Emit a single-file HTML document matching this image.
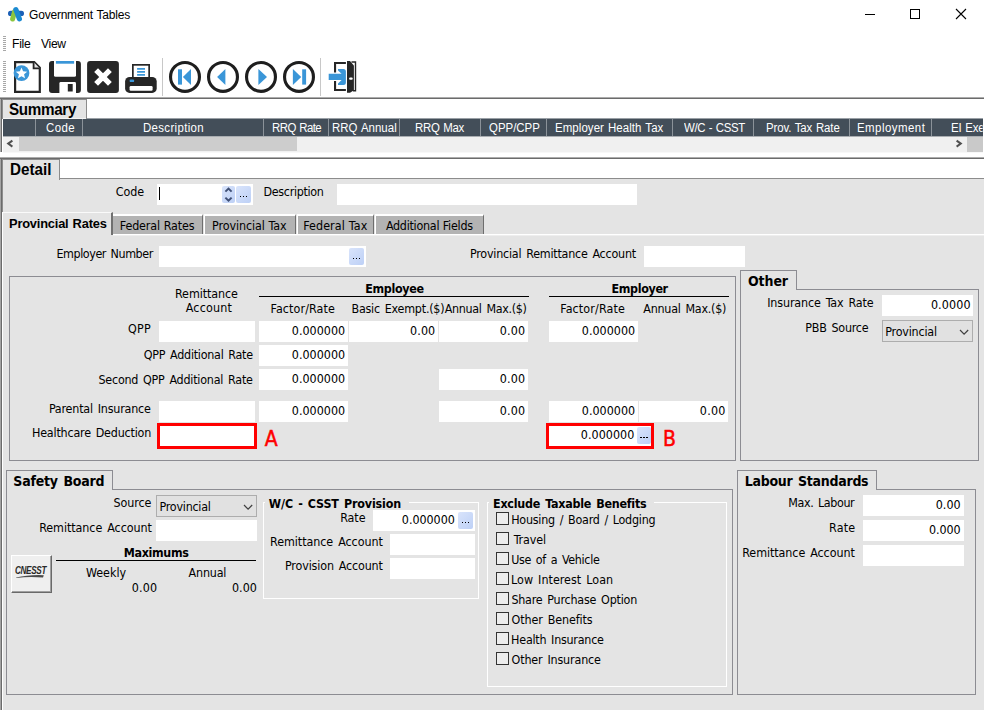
<!DOCTYPE html>
<html lang="en"><head><meta charset="utf-8"><title>Government Tables</title>
<style>
html,body{margin:0;padding:0;}
body{width:984px;height:710px;overflow:hidden;background:#fff;position:relative;}
#w{position:absolute;left:0;top:0;width:984px;height:710px;overflow:hidden;background:#fff;}
#w div{position:absolute;box-sizing:border-box;}
#w svg{position:absolute;overflow:visible;}
.t{position:absolute;white-space:pre;line-height:20px;height:20px;}
</style></head><body><div id="w">
<svg style="left:7px;top:6px" width="18" height="16" viewBox="7 6 18 16"><rect x="8" y="10.8" width="16" height="5.2" rx="2.6" fill="#1b5fb6"/><path d="M14.6 11.5 L12.6 19" stroke="#8cc63f" stroke-width="5" stroke-linecap="round" fill="none"/><path d="M15.9 9.6 L19.4 18.8" stroke="#1b8ad2" stroke-width="5.2" stroke-linecap="round" fill="none"/></svg>
<div style="left:865px;top:14px;width:10px;height:1px;background:#000;"></div>
<div style="left:910px;top:9px;width:10px;height:10px;background:transparent;border:1px solid #000;"></div>
<svg style="left:955px;top:8px" width="12" height="12" viewBox="0 0 12 12"><path d="M1 1 L11 11 M11 1 L1 11" stroke="#000" stroke-width="1.1" fill="none"/></svg>
<div style="left:3px;top:36px;width:3px;height:15px;background:repeating-linear-gradient(to bottom,#a8a8a8 0 1px,#fff 1px 2px);"></div>
<div style="left:3px;top:61px;width:3px;height:31px;background:repeating-linear-gradient(to bottom,#a8a8a8 0 1px,#fff 1px 2px);"></div>
<div style="left:162px;top:58px;width:1px;height:38px;background:#c8c8c8;"></div>
<div style="left:320px;top:58px;width:1px;height:38px;background:#c8c8c8;"></div>
<svg style="left:13px;top:60px" width="29" height="34" viewBox="13 60 29 34"><path d="M15.1 62.1 H34.2 L39.8 67.8 V91.8 H15.1 Z" fill="#fff" stroke="#262626" stroke-width="2.2"/><path d="M33.6 62.1 V68.4 H39.8" fill="#e4e4e4" stroke="#262626" stroke-width="1.8"/><circle cx="21.5" cy="73.1" r="7.9" fill="#3a96d8"/><path d="M21.50 67.50 L23.09 71.32 L27.21 71.65 L24.07 74.33 L25.03 78.35 L21.50 76.20 L17.97 78.35 L18.93 74.33 L15.79 71.65 L19.91 71.32 Z" fill="#fff"/></svg>
<svg style="left:49px;top:61px" width="32" height="32" viewBox="49 61 32 32"><rect x="49" y="61" width="31.9" height="31.9" rx="3" fill="#262626"/><path d="M54 61 H76 V75.3 Q76 76.8 74.5 76.8 H55.5 Q54 76.8 54 75.3 Z" fill="#fff"/><rect x="55.9" y="61" width="18.2" height="2.7" fill="#3a96d8"/><path d="M59.4 92.9 V83.4 Q59.4 82.1 60.7 82.1 H74.7 Q76 82.1 76 83.4 V92.9 Z" fill="#fff"/><rect x="67.8" y="84" width="4.9" height="7.5" fill="#262626"/></svg>
<svg style="left:87px;top:61px" width="32" height="32" viewBox="87 61 32 32"><rect x="87.1" y="61" width="31.8" height="31.9" rx="3" fill="#262626"/><path d="M96.1 70.1 L109.9 83.9 M109.9 70.1 L96.1 83.9" stroke="#fff" stroke-width="5.4" fill="none"/></svg>
<svg style="left:125px;top:61px" width="32" height="32" viewBox="125 61 32 32"><rect x="132.85" y="64.85" width="16.3" height="13" fill="#fff" stroke="#262626" stroke-width="1.7"/><path d="M137.1 68.85 H145 M137.1 71.9 H145 M137.1 74.85 H145" stroke="#3a96d8" stroke-width="1.7"/><rect x="125.1" y="77" width="31.6" height="15.9" rx="4.5" fill="#262626"/><rect x="129.6" y="79.6" width="4.6" height="2.5" rx="1.2" fill="#3a96d8"/><rect x="129.6" y="86.1" width="23" height="4.6" rx="1.2" fill="#fff"/></svg>
<svg style="left:168px;top:60px" width="34" height="34" viewBox="168 60 34 34"><circle cx="185" cy="76.9" r="14.45" fill="#fff" stroke="#1e1e1e" stroke-width="3.1"/><rect x="178" y="69.3" width="4" height="15.3" fill="#3a96d8"/><path d="M191 69.1 V85 L182.9 77 Z" fill="#3a96d8"/></svg>
<svg style="left:206px;top:60px" width="34" height="34" viewBox="206 60 34 34"><circle cx="223" cy="76.9" r="14.45" fill="#fff" stroke="#1e1e1e" stroke-width="3.1"/><path d="M225.4 69.1 V85 L217.1 77 Z" fill="#3a96d8"/></svg>
<svg style="left:244px;top:60px" width="34" height="34" viewBox="244 60 34 34"><circle cx="261" cy="76.9" r="14.45" fill="#fff" stroke="#1e1e1e" stroke-width="3.1"/><path d="M258.4 69.1 V85 L267 77 Z" fill="#3a96d8"/></svg>
<svg style="left:282px;top:60px" width="34" height="34" viewBox="282 60 34 34"><circle cx="299" cy="76.9" r="14.45" fill="#fff" stroke="#1e1e1e" stroke-width="3.1"/><rect x="302.2" y="69.3" width="3.9" height="15.3" fill="#3a96d8"/><path d="M292.9 69.1 V85 L301.2 77 Z" fill="#3a96d8"/></svg>
<svg style="left:327px;top:60px" width="32" height="34" viewBox="327 60 32 34"><path d="M335.05 72.6 V62.95 H345.9 M335.05 81.1 V90.05 H345.9" fill="none" stroke="#262626" stroke-width="2.1"/><path d="M351.5 62 H355.5 V90.8 H353" fill="none" stroke="#262626" stroke-width="1.4"/><path d="M347 61 H350 L353.9 65.5 V90.3 L350 92.7 H347 Z" fill="#262626"/><rect x="349.1" y="77.6" width="3.6" height="2.1" rx="1" fill="#fff"/><path d="M328.7 73.8 H341.6 L338 70.6 V69.1 H343.4 Q345.9 69.1 345.9 71.6 V82.5 Q345.9 85 343.4 85 H338 V83.4 L341.6 80 H328.7 Z" fill="#3a96d8"/></svg>
<div style="left:0px;top:97px;width:984px;height:1px;background:#acacac;"></div>
<div style="left:0px;top:98px;width:984px;height:1px;background:#6b6b6b;"></div>
<div style="left:0px;top:99px;width:1px;height:53px;background:#acacac;"></div>
<div style="left:1px;top:99px;width:1px;height:53px;background:#6b6b6b;"></div>
<div style="left:0px;top:159px;width:1px;height:551px;background:#a4a4a4;"></div>
<div style="left:1px;top:159px;width:1px;height:551px;background:#6b6b6b;"></div>
<div style="left:2px;top:159px;width:1px;height:53px;background:#8c8c8c;"></div>
<div style="left:2px;top:212px;width:1px;height:498px;background:#fff;"></div>
<div style="left:2px;top:99px;width:85px;height:20px;background:#e4e4e4;border:1px solid #8c8c8c;border-bottom:none;"></div>
<div style="left:3px;top:118px;width:83px;height:1px;background:#f4f4f4;"></div>
<div style="left:87px;top:118px;width:896px;height:1px;background:#9aa0a6;"></div>
<div style="left:3px;top:119px;width:980px;height:17px;background:#434e59;"></div>
<div style="left:35px;top:119px;width:1px;height:17px;background:#8b9299;"></div>
<div style="left:82px;top:119px;width:1px;height:17px;background:#8b9299;"></div>
<div style="left:263px;top:119px;width:1px;height:17px;background:#8b9299;"></div>
<div style="left:328px;top:119px;width:1px;height:17px;background:#8b9299;"></div>
<div style="left:399px;top:119px;width:1px;height:17px;background:#8b9299;"></div>
<div style="left:480px;top:119px;width:1px;height:17px;background:#8b9299;"></div>
<div style="left:546px;top:119px;width:1px;height:17px;background:#8b9299;"></div>
<div style="left:672px;top:119px;width:1px;height:17px;background:#8b9299;"></div>
<div style="left:753px;top:119px;width:1px;height:17px;background:#8b9299;"></div>
<div style="left:849px;top:119px;width:1px;height:17px;background:#8b9299;"></div>
<div style="left:931px;top:119px;width:1px;height:17px;background:#8b9299;"></div>
<div style="left:3px;top:136px;width:980px;height:1px;background:#a9adb1;"></div>
<div style="left:3px;top:137px;width:980px;height:15px;background:#f0f0f0;"></div>
<div style="left:3px;top:152px;width:980px;height:1px;background:#f8f8f8;"></div>
<div style="left:19px;top:137px;width:278px;height:14px;background:#cdcdcd;"></div>
<div style="left:967px;top:137px;width:16px;height:15px;background:#c9c9c9;"></div>
<svg style="left:6px;top:139px" width="9" height="10" viewBox="6 139 9 10"><path d="M12.4 140.6 L8.2 143.6 L12.4 146.6" stroke="#505050" stroke-width="2" fill="none"/></svg>
<svg style="left:954px;top:139px" width="9" height="10" viewBox="954 139 9 10"><path d="M956.6 140.6 L960.8 143.6 L956.6 146.6" stroke="#505050" stroke-width="2" fill="none"/></svg>
<div style="left:0px;top:157px;width:984px;height:1px;background:#acacac;"></div>
<div style="left:0px;top:158px;width:984px;height:1px;background:#6b6b6b;"></div>
<div style="left:3px;top:179px;width:981px;height:531px;background:#e4e4e4;"></div>
<div style="left:60px;top:178px;width:924px;height:1px;background:#8c8c8c;"></div>
<div style="left:2px;top:159px;width:58px;height:21px;background:#e4e4e4;border:1px solid #8c8c8c;border-bottom:none;"></div>
<div style="left:157px;top:184px;width:96px;height:21px;background:#fff;"></div>
<div style="left:159px;top:187px;width:1px;height:13px;background:#000;"></div>
<div style="left:222px;top:186px;width:13px;height:17px;background:linear-gradient(135deg,#d9e4fb,#bdd0f6);border-radius:2px;"></div>
<svg style="left:222px;top:186px" width="13" height="17" viewBox="222 186 13 17"><path d="M225.4 191.6 L228.5 188.6 L231.6 191.6 M225.4 197.6 L228.5 200.6 L231.6 197.6" stroke="#3f4f75" stroke-width="2" fill="none"/></svg>
<div style="left:236px;top:186px;width:15px;height:17px;background:linear-gradient(135deg,#d9e4fb,#bdd0f6);border-radius:2px;"></div>
<div style="left:239.8px;top:195.8px;width:1.4px;height:1.4px;background:#000;"></div>
<div style="left:242.8px;top:195.8px;width:1.4px;height:1.4px;background:#000;"></div>
<div style="left:245.8px;top:195.8px;width:1.4px;height:1.4px;background:#000;"></div>
<div style="left:337px;top:184px;width:300px;height:21px;background:#fff;"></div>
<div style="left:2px;top:212px;width:111px;height:23px;background:#e4e4e4;border-left:1px solid #fff;border-top:1px solid #fafafa;border-right:2px solid #707070;"></div>
<div style="left:113px;top:234px;width:871px;height:1px;background:#fff;"></div>
<div style="left:113px;top:235px;width:871px;height:1px;background:#eeeeee;"></div>
<div style="left:113px;top:214px;width:90px;height:20px;background:#b3b3b3;border-top:2px solid #fff;border-right:1px solid #6e6e6e;"></div>
<div style="left:204px;top:214px;width:92px;height:20px;background:#b3b3b3;border-left:1px solid #fff;border-top:2px solid #fff;border-right:1px solid #6e6e6e;"></div>
<div style="left:297px;top:214px;width:77px;height:20px;background:#b3b3b3;border-left:1px solid #fff;border-top:2px solid #fff;border-right:1px solid #6e6e6e;"></div>
<div style="left:375px;top:214px;width:109px;height:20px;background:#b3b3b3;border-left:1px solid #fff;border-top:2px solid #fff;border-right:1px solid #6e6e6e;"></div>
<div style="left:159px;top:246px;width:207px;height:21px;background:#fff;"></div>
<div style="left:349px;top:248px;width:15px;height:17px;background:linear-gradient(135deg,#d9e4fb,#bdd0f6);border-radius:2px;"></div>
<div style="left:352.8px;top:257.8px;width:1.4px;height:1.4px;background:#000;"></div>
<div style="left:355.8px;top:257.8px;width:1.4px;height:1.4px;background:#000;"></div>
<div style="left:358.8px;top:257.8px;width:1.4px;height:1.4px;background:#000;"></div>
<div style="left:644px;top:246px;width:101px;height:21px;background:#fff;"></div>
<div style="left:9px;top:276px;width:727px;height:185px;background:transparent;border:1px solid #8c8c92;"></div>
<div style="left:259px;top:296px;width:270px;height:1px;background:#000;"></div>
<div style="left:549px;top:296px;width:180px;height:1px;background:#000;"></div>
<div style="left:159px;top:321px;width:96px;height:21px;background:#fff;"></div>
<div style="left:259px;top:321px;width:89px;height:21px;background:#fff;"></div>
<div style="left:349px;top:321px;width:89px;height:21px;background:#fff;"></div>
<div style="left:439px;top:321px;width:89px;height:21px;background:#fff;"></div>
<div style="left:549px;top:321px;width:89px;height:21px;background:#fff;"></div>
<div style="left:259px;top:345px;width:89px;height:21px;background:#fff;"></div>
<div style="left:259px;top:369px;width:89px;height:21px;background:#fff;"></div>
<div style="left:439px;top:369px;width:89px;height:21px;background:#fff;"></div>
<div style="left:159px;top:401px;width:96px;height:21px;background:#fff;"></div>
<div style="left:259px;top:401px;width:89px;height:21px;background:#fff;"></div>
<div style="left:439px;top:401px;width:89px;height:21px;background:#fff;"></div>
<div style="left:549px;top:401px;width:89px;height:21px;background:#fff;"></div>
<div style="left:639px;top:401px;width:89px;height:21px;background:#fff;"></div>
<div style="left:157px;top:423px;width:100px;height:26px;background:#fff;border:3px solid #f00;"></div>
<div style="left:546px;top:423px;width:108px;height:26px;background:#fff;border:3px solid #f00;"></div>
<div style="left:637px;top:427px;width:14px;height:17px;background:linear-gradient(135deg,#d9e4fb,#bdd0f6);border-radius:2px;"></div>
<div style="left:640.3px;top:436.8px;width:1.4px;height:1.4px;background:#000;"></div>
<div style="left:643.3px;top:436.8px;width:1.4px;height:1.4px;background:#000;"></div>
<div style="left:646.3px;top:436.8px;width:1.4px;height:1.4px;background:#000;"></div>
<div style="left:740px;top:289px;width:239px;height:172px;background:transparent;border:1px solid #8c8c92;"></div>
<div style="left:740px;top:270px;width:57px;height:20px;background:#e4e4e4;border:1px solid #8c8c92;border-bottom:none;"></div>
<div style="left:882px;top:295px;width:91px;height:21px;background:#fff;"></div>
<div style="left:882px;top:320px;width:91px;height:22px;background:#e1e1e1;border:1px solid #adadad;"></div>
<svg style="left:958.8px;top:328.6px" width="10.200000000000045" height="6.199999999999989" viewBox="958.8 328.6 10.200000000000045 6.199999999999989"><path d="M959.8 329.6 L963.9 333.8 L968 329.6" stroke="#404040" stroke-width="1.2" fill="none"/></svg>
<div style="left:6px;top:489px;width:727px;height:206px;background:transparent;border:1px solid #8c8c92;"></div>
<div style="left:6px;top:470px;width:107px;height:20px;background:#e4e4e4;border:1px solid #8c8c92;border-bottom:none;"></div>
<div style="left:156px;top:495px;width:101px;height:22px;background:#e1e1e1;border:1px solid #adadad;"></div>
<svg style="left:242.9px;top:503.7px" width="10.199999999999989" height="6.199999999999989" viewBox="242.9 503.7 10.199999999999989 6.199999999999989"><path d="M243.9 504.7 L248.0 508.9 L252.1 504.7" stroke="#404040" stroke-width="1.2" fill="none"/></svg>
<div style="left:156px;top:520px;width:101px;height:21px;background:#fff;"></div>
<div style="left:56px;top:560px;width:200px;height:1px;background:#000;"></div>
<div style="left:11px;top:555px;width:41px;height:38px;background:#efefef;border-left:1px solid #fff;border-top:1px solid #fff;border-right:1px solid #696969;border-bottom:1px solid #696969;box-shadow:inset -1px -1px 0 #a0a0a0;"></div>
<svg style="left:15px;top:574px" width="32" height="5" viewBox="15 574 32 5"><path d="M16.2 577.6 Q28 574.6 43.8 575.2 L43 577.6 Q30 576.2 16.2 577.9 Z" fill="#4a4a4a"/></svg>
<div style="left:263px;top:502px;width:216px;height:97px;background:transparent;border:1px solid #fff;"></div>
<div style="left:265px;top:498px;width:144px;height:10px;background:#e4e4e4;"></div>
<div style="left:373px;top:510px;width:102px;height:21px;background:#fff;"></div>
<div style="left:458px;top:512px;width:15px;height:17px;background:linear-gradient(135deg,#d9e4fb,#bdd0f6);border-radius:2px;"></div>
<div style="left:461.8px;top:521.8px;width:1.4px;height:1.4px;background:#000;"></div>
<div style="left:464.8px;top:521.8px;width:1.4px;height:1.4px;background:#000;"></div>
<div style="left:467.8px;top:521.8px;width:1.4px;height:1.4px;background:#000;"></div>
<div style="left:390px;top:534px;width:85px;height:21px;background:#fff;"></div>
<div style="left:390px;top:558px;width:85px;height:21px;background:#fff;"></div>
<div style="left:487px;top:502px;width:240px;height:185px;background:transparent;border:1px solid #fff;"></div>
<div style="left:489px;top:498px;width:165px;height:10px;background:#e4e4e4;"></div>
<div style="left:496px;top:512px;width:13px;height:13px;background:#ededed;border:1px solid #333;"></div>
<div style="left:496px;top:532px;width:13px;height:13px;background:#ededed;border:1px solid #333;"></div>
<div style="left:496px;top:552px;width:13px;height:13px;background:#ededed;border:1px solid #333;"></div>
<div style="left:496px;top:572px;width:13px;height:13px;background:#ededed;border:1px solid #333;"></div>
<div style="left:496px;top:592px;width:13px;height:13px;background:#ededed;border:1px solid #333;"></div>
<div style="left:496px;top:612px;width:13px;height:13px;background:#ededed;border:1px solid #333;"></div>
<div style="left:496px;top:632px;width:13px;height:13px;background:#ededed;border:1px solid #333;"></div>
<div style="left:496px;top:652px;width:13px;height:13px;background:#ededed;border:1px solid #333;"></div>
<div style="left:737px;top:489px;width:239px;height:206px;background:transparent;border:1px solid #8c8c92;"></div>
<div style="left:737px;top:470px;width:140px;height:20px;background:#e4e4e4;border:1px solid #8c8c92;border-bottom:none;"></div>
<div style="left:863px;top:495px;width:101px;height:21px;background:#fff;"></div>
<div style="left:863px;top:520px;width:101px;height:21px;background:#fff;"></div>
<div style="left:863px;top:545px;width:101px;height:21px;background:#fff;"></div>
<span class="t" style="left:29.11px;top:5.00px;font-family:'Liberation Sans',sans-serif;font-size:12px;color:#000;letter-spacing:-0.225px;word-spacing:0.8px;">Government Tables</span>
<span class="t" style="left:12.33px;top:34.00px;font-family:'Liberation Sans',sans-serif;font-size:12.8px;color:#000;letter-spacing:-0.295px;transform:scaleX(0.95);transform-origin:0 0;">File</span>
<span class="t" style="left:41.18px;top:34.00px;font-family:'Liberation Sans',sans-serif;font-size:12.8px;color:#000;letter-spacing:-0.374px;transform:scaleX(0.95);transform-origin:0 0;">View</span>
<span class="t" style="left:9.48px;top:99.00px;font-family:'Liberation Sans',sans-serif;font-size:16.2px;color:#000;font-weight:bold;letter-spacing:-0.342px;transform:scaleX(0.94);transform-origin:0 0;">Summary</span>
<span class="t" style="left:46.36px;top:118.00px;font-family:'Liberation Sans',sans-serif;font-size:12.3px;color:#fff;letter-spacing:0.418px;transform:scaleX(0.93);transform-origin:0 0;">Code</span>
<span class="t" style="left:143.29px;top:118.00px;font-family:'Liberation Sans',sans-serif;font-size:12.3px;color:#fff;letter-spacing:0.365px;transform:scaleX(0.93);transform-origin:0 0;">Description</span>
<span class="t" style="left:271.79px;top:118.00px;font-family:'Liberation Sans',sans-serif;font-size:12.3px;color:#fff;letter-spacing:-0.582px;word-spacing:0.8px;transform:scaleX(0.93);transform-origin:0 0;">RRQ Rate</span>
<span class="t" style="left:332.06px;top:118.00px;font-family:'Liberation Sans',sans-serif;font-size:12.3px;color:#fff;letter-spacing:0.048px;word-spacing:0.8px;transform:scaleX(0.93);transform-origin:0 0;">RRQ Annual</span>
<span class="t" style="left:415.06px;top:118.00px;font-family:'Liberation Sans',sans-serif;font-size:12.3px;color:#fff;letter-spacing:-0.295px;word-spacing:0.8px;transform:scaleX(0.93);transform-origin:0 0;">RRQ Max</span>
<span class="t" style="left:488.73px;top:118.00px;font-family:'Liberation Sans',sans-serif;font-size:12.3px;color:#fff;letter-spacing:-0.003px;transform:scaleX(0.93);transform-origin:0 0;">QPP/CPP</span>
<span class="t" style="left:555.30px;top:118.00px;font-family:'Liberation Sans',sans-serif;font-size:12.3px;color:#fff;letter-spacing:0.092px;word-spacing:0.8px;transform:scaleX(0.93);transform-origin:0 0;">Employer Health Tax</span>
<span class="t" style="left:684.09px;top:118.00px;font-family:'Liberation Sans',sans-serif;font-size:12.3px;color:#fff;letter-spacing:-0.374px;word-spacing:0.8px;transform:scaleX(0.93);transform-origin:0 0;">W/C - CSST</span>
<span class="t" style="left:765.68px;top:118.00px;font-family:'Liberation Sans',sans-serif;font-size:12.3px;color:#fff;letter-spacing:-0.140px;word-spacing:0.8px;transform:scaleX(0.93);transform-origin:0 0;">Prov. Tax Rate</span>
<span class="t" style="left:856.89px;top:118.00px;font-family:'Liberation Sans',sans-serif;font-size:12.3px;color:#fff;letter-spacing:0.517px;transform:scaleX(0.93);transform-origin:0 0;">Employment</span>
<span class="t" style="left:950.90px;top:118.00px;font-family:'Liberation Sans',sans-serif;font-size:12.3px;color:#fff;letter-spacing:-0.191px;word-spacing:0.8px;overflow:hidden;width:33.5px;transform:scaleX(0.93);transform-origin:0 0;">EI Exempt</span>
<span class="t" style="left:10.11px;top:159.00px;font-family:'Liberation Sans',sans-serif;font-size:16.2px;color:#000;font-weight:bold;letter-spacing:0.035px;transform:scaleX(0.94);transform-origin:0 0;">Detail</span>
<span class="t" style="left:115.85px;top:182.00px;font-family:'DejaVu Sans Condensed','Liberation Sans',sans-serif;font-size:12.4px;color:#000;letter-spacing:-0.122px;">Code</span>
<span class="t" style="left:263.59px;top:182.00px;font-family:'DejaVu Sans Condensed','Liberation Sans',sans-serif;font-size:12.4px;color:#000;letter-spacing:-0.330px;">Description</span>
<span class="t" style="left:8.78px;top:214.00px;font-family:'Liberation Sans',sans-serif;font-size:13.4px;color:#000;font-weight:bold;letter-spacing:-0.207px;word-spacing:0.8px;transform:scaleX(0.96);transform-origin:0 0;">Provincial Rates</span>
<span class="t" style="left:119.80px;top:216.00px;font-family:'DejaVu Sans Condensed','Liberation Sans',sans-serif;font-size:12.4px;color:#000;letter-spacing:-0.126px;word-spacing:0.3px;">Federal Rates</span>
<span class="t" style="left:212.04px;top:216.00px;font-family:'DejaVu Sans Condensed','Liberation Sans',sans-serif;font-size:12.4px;color:#000;letter-spacing:-0.080px;word-spacing:0.3px;">Provincial Tax</span>
<span class="t" style="left:303.19px;top:216.00px;font-family:'DejaVu Sans Condensed','Liberation Sans',sans-serif;font-size:12.4px;color:#000;letter-spacing:0.100px;word-spacing:0.3px;">Federal Tax</span>
<span class="t" style="left:385.89px;top:216.00px;font-family:'DejaVu Sans Condensed','Liberation Sans',sans-serif;font-size:12.4px;color:#000;letter-spacing:-0.256px;word-spacing:0.3px;">Additional Fields</span>
<span class="t" style="left:56.47px;top:244.00px;font-family:'DejaVu Sans Condensed','Liberation Sans',sans-serif;font-size:12.4px;color:#000;letter-spacing:-0.424px;word-spacing:1.5px;">Employer Number</span>
<span class="t" style="left:470.01px;top:244.00px;font-family:'DejaVu Sans Condensed','Liberation Sans',sans-serif;font-size:12.4px;color:#000;letter-spacing:-0.219px;word-spacing:1.5px;">Provincial Remittance Account</span>
<span class="t" style="left:175.02px;top:284.00px;font-family:'DejaVu Sans Condensed','Liberation Sans',sans-serif;font-size:12.4px;color:#000;letter-spacing:-0.086px;">Remittance</span>
<span class="t" style="left:185.78px;top:298.00px;font-family:'DejaVu Sans Condensed','Liberation Sans',sans-serif;font-size:12.4px;color:#000;letter-spacing:0.189px;">Account</span>
<span class="t" style="left:365.24px;top:279.00px;font-family:'DejaVu Sans Condensed','Liberation Sans',sans-serif;font-size:12.4px;color:#000;font-weight:bold;letter-spacing:-0.313px;">Employee</span>
<span class="t" style="left:611.50px;top:279.00px;font-family:'DejaVu Sans Condensed','Liberation Sans',sans-serif;font-size:12.4px;color:#000;font-weight:bold;letter-spacing:-0.346px;">Employer</span>
<span class="t" style="left:270.50px;top:299.00px;font-family:'DejaVu Sans Condensed','Liberation Sans',sans-serif;font-size:12.4px;color:#000;letter-spacing:0.106px;">Factor/Rate</span>
<span class="t" style="left:351.46px;top:299.00px;font-family:'DejaVu Sans Condensed','Liberation Sans',sans-serif;font-size:12.4px;color:#000;letter-spacing:-0.211px;word-spacing:1.5px;">Basic Exempt.($)</span>
<span class="t" style="left:444.74px;top:299.00px;font-family:'DejaVu Sans Condensed','Liberation Sans',sans-serif;font-size:12.4px;color:#000;letter-spacing:-0.307px;word-spacing:1.5px;">Annual Max.($)</span>
<span class="t" style="left:560.24px;top:299.00px;font-family:'DejaVu Sans Condensed','Liberation Sans',sans-serif;font-size:12.4px;color:#000;letter-spacing:0.133px;">Factor/Rate</span>
<span class="t" style="left:643.28px;top:299.00px;font-family:'DejaVu Sans Condensed','Liberation Sans',sans-serif;font-size:12.4px;color:#000;letter-spacing:-0.233px;word-spacing:1.5px;">Annual Max.($)</span>
<span class="t" style="left:127.96px;top:319.00px;font-family:'DejaVu Sans Condensed','Liberation Sans',sans-serif;font-size:12.4px;color:#000;letter-spacing:0.331px;">QPP</span>
<span class="t" style="left:143.85px;top:345.00px;font-family:'DejaVu Sans Condensed','Liberation Sans',sans-serif;font-size:12.4px;color:#000;letter-spacing:-0.254px;word-spacing:1.5px;">QPP Additional Rate</span>
<span class="t" style="left:98.47px;top:370.00px;font-family:'DejaVu Sans Condensed','Liberation Sans',sans-serif;font-size:12.4px;color:#000;letter-spacing:-0.216px;word-spacing:1.5px;">Second QPP Additional Rate</span>
<span class="t" style="left:48.89px;top:399.00px;font-family:'DejaVu Sans Condensed','Liberation Sans',sans-serif;font-size:12.4px;color:#000;letter-spacing:-0.189px;word-spacing:1.5px;">Parental Insurance</span>
<span class="t" style="left:31.97px;top:423.00px;font-family:'DejaVu Sans Condensed','Liberation Sans',sans-serif;font-size:12.4px;color:#000;letter-spacing:-0.186px;word-spacing:1.5px;">Healthcare Deduction</span>
<span class="t" style="left:291.84px;top:321.00px;font-family:'DejaVu Sans Condensed','Liberation Sans',sans-serif;font-size:12.4px;color:#000;letter-spacing:0.009px;">0.000000</span>
<span class="t" style="left:291.84px;top:345.00px;font-family:'DejaVu Sans Condensed','Liberation Sans',sans-serif;font-size:12.4px;color:#000;letter-spacing:0.009px;">0.000000</span>
<span class="t" style="left:291.84px;top:369.00px;font-family:'DejaVu Sans Condensed','Liberation Sans',sans-serif;font-size:12.4px;color:#000;letter-spacing:0.009px;">0.000000</span>
<span class="t" style="left:291.84px;top:401.00px;font-family:'DejaVu Sans Condensed','Liberation Sans',sans-serif;font-size:12.4px;color:#000;letter-spacing:0.009px;">0.000000</span>
<span class="t" style="left:410.12px;top:321.00px;font-family:'DejaVu Sans Condensed','Liberation Sans',sans-serif;font-size:12.4px;color:#000;letter-spacing:0.079px;">0.00</span>
<span class="t" style="left:499.84px;top:321.00px;font-family:'DejaVu Sans Condensed','Liberation Sans',sans-serif;font-size:12.4px;color:#000;letter-spacing:0.169px;">0.00</span>
<span class="t" style="left:499.84px;top:369.00px;font-family:'DejaVu Sans Condensed','Liberation Sans',sans-serif;font-size:12.4px;color:#000;letter-spacing:0.169px;">0.00</span>
<span class="t" style="left:499.84px;top:401.00px;font-family:'DejaVu Sans Condensed','Liberation Sans',sans-serif;font-size:12.4px;color:#000;letter-spacing:0.169px;">0.00</span>
<span class="t" style="left:581.84px;top:321.00px;font-family:'DejaVu Sans Condensed','Liberation Sans',sans-serif;font-size:12.4px;color:#000;letter-spacing:0.009px;">0.000000</span>
<span class="t" style="left:581.84px;top:401.00px;font-family:'DejaVu Sans Condensed','Liberation Sans',sans-serif;font-size:12.4px;color:#000;letter-spacing:0.009px;">0.000000</span>
<span class="t" style="left:699.83px;top:401.00px;font-family:'DejaVu Sans Condensed','Liberation Sans',sans-serif;font-size:12.4px;color:#000;letter-spacing:0.212px;">0.00</span>
<span class="t" style="left:264.81px;top:429.00px;font-family:'DejaVu Sans Condensed','Liberation Sans',sans-serif;font-size:21px;color:#f00;-webkit-text-stroke:0.5px #f00;">A</span>
<span class="t" style="left:580.82px;top:425.00px;font-family:'DejaVu Sans Condensed','Liberation Sans',sans-serif;font-size:12.4px;color:#000;letter-spacing:0.053px;">0.000000</span>
<span class="t" style="left:662.99px;top:429.00px;font-family:'DejaVu Sans Condensed','Liberation Sans',sans-serif;font-size:21px;color:#f00;-webkit-text-stroke:0.5px #f00;">B</span>
<span class="t" style="left:747.94px;top:271.00px;font-family:'DejaVu Sans Condensed','Liberation Sans',sans-serif;font-size:14px;color:#000;font-weight:bold;letter-spacing:-0.083px;">Other</span>
<span class="t" style="left:767.20px;top:293.00px;font-family:'DejaVu Sans Condensed','Liberation Sans',sans-serif;font-size:12.4px;color:#000;letter-spacing:-0.124px;word-spacing:1.5px;">Insurance Tax Rate</span>
<span class="t" style="left:930.90px;top:295.00px;font-family:'DejaVu Sans Condensed','Liberation Sans',sans-serif;font-size:12.4px;color:#000;letter-spacing:0.121px;">0.0000</span>
<span class="t" style="left:805.18px;top:318.00px;font-family:'DejaVu Sans Condensed','Liberation Sans',sans-serif;font-size:12.4px;color:#000;letter-spacing:-0.207px;word-spacing:1.5px;">PBB Source</span>
<span class="t" style="left:885.33px;top:322.00px;font-family:'DejaVu Sans Condensed','Liberation Sans',sans-serif;font-size:12.4px;color:#000;letter-spacing:-0.208px;">Provincial</span>
<span class="t" style="left:13.32px;top:471.00px;font-family:'DejaVu Sans Condensed','Liberation Sans',sans-serif;font-size:14px;color:#000;font-weight:bold;letter-spacing:-0.219px;word-spacing:1.5px;">Safety Board</span>
<span class="t" style="left:113.48px;top:493.00px;font-family:'DejaVu Sans Condensed','Liberation Sans',sans-serif;font-size:12.4px;color:#000;letter-spacing:-0.063px;">Source</span>
<span class="t" style="left:159.54px;top:497.00px;font-family:'DejaVu Sans Condensed','Liberation Sans',sans-serif;font-size:12.4px;color:#000;letter-spacing:-0.241px;">Provincial</span>
<span class="t" style="left:39.18px;top:518.00px;font-family:'DejaVu Sans Condensed','Liberation Sans',sans-serif;font-size:12.4px;color:#000;letter-spacing:-0.056px;word-spacing:1.5px;">Remittance Account</span>
<span class="t" style="left:123.87px;top:543.00px;font-family:'DejaVu Sans Condensed','Liberation Sans',sans-serif;font-size:12.4px;color:#000;font-weight:bold;letter-spacing:-0.358px;">Maximums</span>
<span class="t" style="left:85.94px;top:563.00px;font-family:'DejaVu Sans Condensed','Liberation Sans',sans-serif;font-size:12.4px;color:#000;letter-spacing:0.005px;">Weekly</span>
<span class="t" style="left:188.52px;top:563.00px;font-family:'DejaVu Sans Condensed','Liberation Sans',sans-serif;font-size:12.4px;color:#000;letter-spacing:-0.162px;">Annual</span>
<span class="t" style="left:131.79px;top:578.00px;font-family:'DejaVu Sans Condensed','Liberation Sans',sans-serif;font-size:12.4px;color:#000;letter-spacing:0.139px;">0.00</span>
<span class="t" style="left:231.95px;top:578.00px;font-family:'DejaVu Sans Condensed','Liberation Sans',sans-serif;font-size:12.4px;color:#000;letter-spacing:0.068px;">0.00</span>
<span class="t" style="left:15.12px;top:561.00px;font-family:'Liberation Sans',sans-serif;font-size:10.2px;color:#2a2a2a;font-weight:bold;font-style:italic;letter-spacing:-0.404px;transform:scaleX(0.8);transform-origin:0 0;">CNESST</span>
<span class="t" style="left:268.85px;top:494.00px;font-family:'DejaVu Sans Condensed','Liberation Sans',sans-serif;font-size:12.4px;color:#000;font-weight:bold;letter-spacing:-0.159px;word-spacing:1.5px;">W/C - CSST Provision</span>
<span class="t" style="left:340.13px;top:508.00px;font-family:'DejaVu Sans Condensed','Liberation Sans',sans-serif;font-size:12.4px;color:#000;letter-spacing:-0.055px;">Rate</span>
<span class="t" style="left:401.84px;top:510.00px;font-family:'DejaVu Sans Condensed','Liberation Sans',sans-serif;font-size:12.4px;color:#000;letter-spacing:-0.022px;">0.000000</span>
<span class="t" style="left:270.02px;top:532.00px;font-family:'DejaVu Sans Condensed','Liberation Sans',sans-serif;font-size:12.4px;color:#000;letter-spacing:-0.046px;word-spacing:1.5px;">Remittance Account</span>
<span class="t" style="left:285.00px;top:556.00px;font-family:'DejaVu Sans Condensed','Liberation Sans',sans-serif;font-size:12.4px;color:#000;letter-spacing:-0.142px;word-spacing:1.5px;">Provision Account</span>
<span class="t" style="left:493.03px;top:494.00px;font-family:'DejaVu Sans Condensed','Liberation Sans',sans-serif;font-size:12.4px;color:#000;font-weight:bold;letter-spacing:-0.244px;word-spacing:1.5px;">Exclude Taxable Benefits</span>
<span class="t" style="left:511.19px;top:510.00px;font-family:'DejaVu Sans Condensed','Liberation Sans',sans-serif;font-size:12.4px;color:#000;letter-spacing:-0.232px;word-spacing:1.5px;">Housing / Board / Lodging</span>
<span class="t" style="left:513.65px;top:530.00px;font-family:'DejaVu Sans Condensed','Liberation Sans',sans-serif;font-size:12.4px;color:#000;letter-spacing:-0.083px;">Travel</span>
<span class="t" style="left:511.13px;top:550.00px;font-family:'DejaVu Sans Condensed','Liberation Sans',sans-serif;font-size:12.4px;color:#000;letter-spacing:-0.306px;word-spacing:1.5px;">Use of a Vehicle</span>
<span class="t" style="left:511.03px;top:570.00px;font-family:'DejaVu Sans Condensed','Liberation Sans',sans-serif;font-size:12.4px;color:#000;letter-spacing:0.026px;word-spacing:1.5px;">Low Interest Loan</span>
<span class="t" style="left:511.38px;top:590.00px;font-family:'DejaVu Sans Condensed','Liberation Sans',sans-serif;font-size:12.4px;color:#000;letter-spacing:-0.207px;word-spacing:1.5px;">Share Purchase Option</span>
<span class="t" style="left:511.53px;top:610.00px;font-family:'DejaVu Sans Condensed','Liberation Sans',sans-serif;font-size:12.4px;color:#000;letter-spacing:-0.090px;word-spacing:1.5px;">Other Benefits</span>
<span class="t" style="left:511.12px;top:630.00px;font-family:'DejaVu Sans Condensed','Liberation Sans',sans-serif;font-size:12.4px;color:#000;letter-spacing:-0.238px;word-spacing:1.5px;">Health Insurance</span>
<span class="t" style="left:511.59px;top:650.00px;font-family:'DejaVu Sans Condensed','Liberation Sans',sans-serif;font-size:12.4px;color:#000;letter-spacing:-0.148px;word-spacing:1.5px;">Other Insurance</span>
<span class="t" style="left:744.82px;top:471.00px;font-family:'DejaVu Sans Condensed','Liberation Sans',sans-serif;font-size:14px;color:#000;font-weight:bold;letter-spacing:-0.284px;word-spacing:1.5px;">Labour Standards</span>
<span class="t" style="left:788.25px;top:493.00px;font-family:'DejaVu Sans Condensed','Liberation Sans',sans-serif;font-size:12.4px;color:#000;letter-spacing:-0.381px;word-spacing:1.5px;">Max. Labour</span>
<span class="t" style="left:935.70px;top:495.00px;font-family:'DejaVu Sans Condensed','Liberation Sans',sans-serif;font-size:12.4px;color:#000;letter-spacing:0.072px;">0.00</span>
<span class="t" style="left:828.99px;top:518.00px;font-family:'DejaVu Sans Condensed','Liberation Sans',sans-serif;font-size:12.4px;color:#000;letter-spacing:0.190px;">Rate</span>
<span class="t" style="left:928.89px;top:520.00px;font-family:'DejaVu Sans Condensed','Liberation Sans',sans-serif;font-size:12.4px;color:#000;letter-spacing:-0.060px;">0.000</span>
<span class="t" style="left:742.21px;top:543.00px;font-family:'DejaVu Sans Condensed','Liberation Sans',sans-serif;font-size:12.4px;color:#000;letter-spacing:-0.063px;word-spacing:1.5px;">Remittance Account</span>
</div></body></html>
